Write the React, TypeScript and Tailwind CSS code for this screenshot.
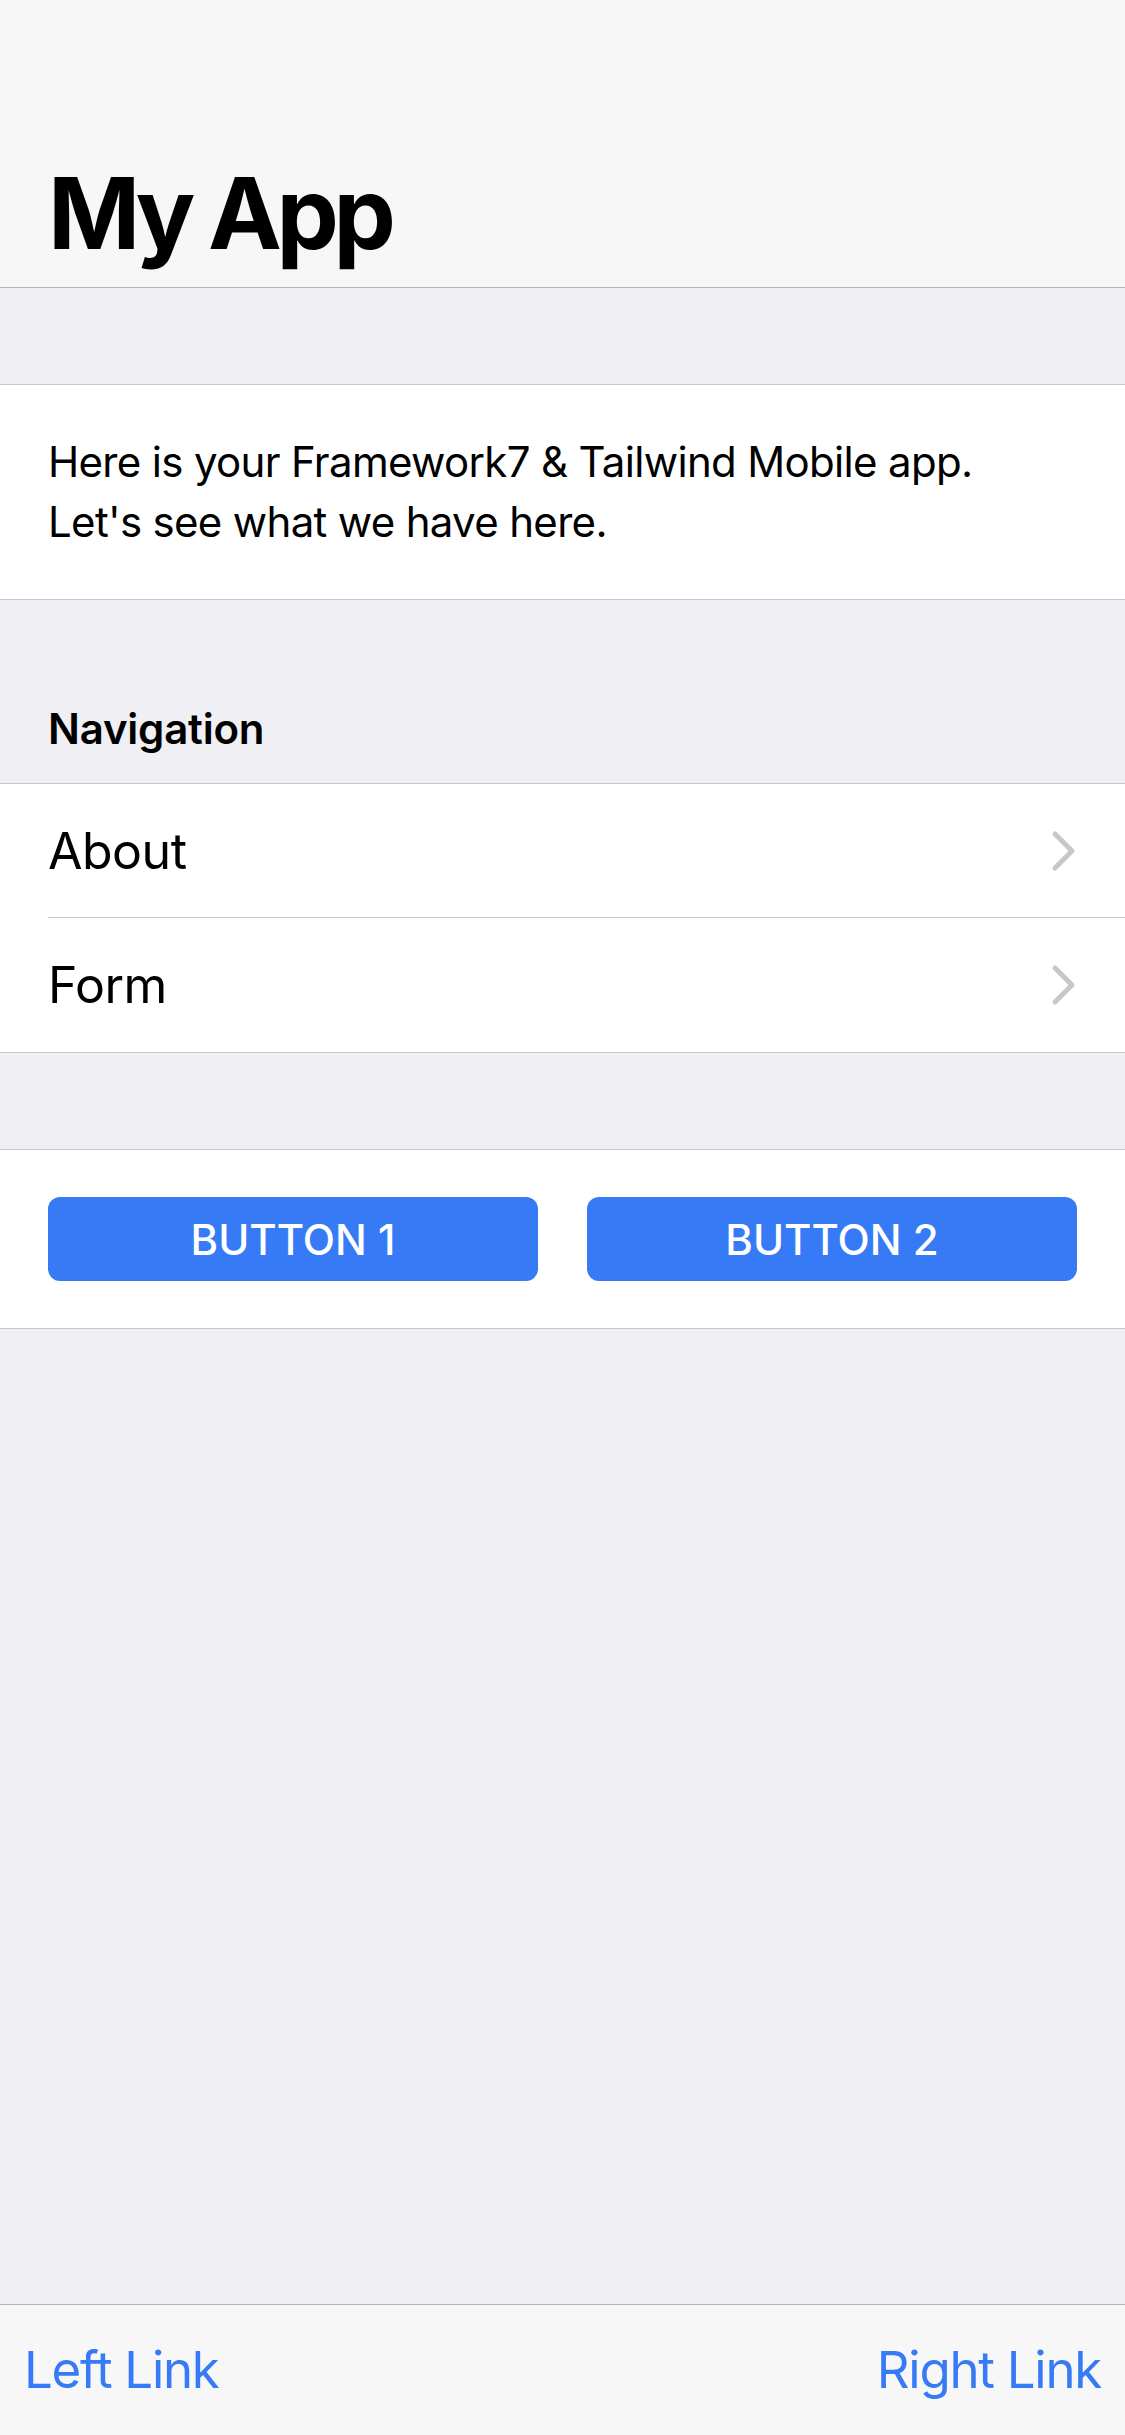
import React from "react";

function Chevron() {
  return (
    <svg width="26" height="42" viewBox="0 0 26 42" className="shrink-0">
      <path d="M4 4 L21 21 L4 38" fill="none" stroke="#c7c7cc" strokeWidth="5" strokeLinecap="round" strokeLinejoin="round" />
    </svg>
  );
}

export default function App() {
  return (
    <div className="h-screen flex flex-col bg-[#efeff4] font-['Inter',sans-serif] text-black overflow-hidden">
      <header className="h-[288px] shrink-0 bg-[#f7f7f8] border-b border-[#b4b4b8] flex items-end px-[48px] pb-[14px]">
        <h1 className="text-[99px] leading-[120px] font-bold tracking-[-0.055em]">My App</h1>
      </header>

      <main className="flex-1 flex flex-col">
        <div className="mt-[96px] bg-white border-y border-[#c8c7cc] px-[48px] py-[47px] text-[42px] leading-[60px] tracking-[-0.016em]">
          <p>Here is your Framework7 &amp; Tailwind Mobile app.</p>
          <p>Let's see what we have here.</p>
        </div>

        <div className="pt-[97px] pb-[23px] px-[48px] text-[42px] leading-[63px] font-semibold tracking-[-0.005em]">Navigation</div>

        <ul className="bg-white border-y border-[#c8c7cc]">
          <li className="pl-[48px]">
            <div className="h-[134px] flex items-center justify-between pr-[48px] border-b border-[#c8c7cc] text-[50px] leading-[60px] tracking-[-0.01em]">
              <span>About</span>
              <Chevron />
            </div>
          </li>
          <li className="pl-[48px]">
            <div className="h-[134px] flex items-center justify-between pr-[48px] text-[50px] leading-[60px] tracking-[-0.01em]">
              <span>Form</span>
              <Chevron />
            </div>
          </li>
        </ul>

        <div className="mt-[96px] bg-white border-y border-[#c8c7cc] px-[48px] py-[47px] grid grid-cols-2 gap-[49px]">
          <button className="h-[84px] rounded-[12px] bg-[#367bf5] text-white text-[42px] font-medium uppercase">Button 1</button>
          <button className="h-[84px] rounded-[12px] bg-[#367bf5] text-white text-[42px] font-medium uppercase">Button 2</button>
        </div>
      </main>

      <footer className="h-[131px] shrink-0 bg-[#f7f7f8] border-t border-[#b4b4b8] flex items-center justify-between px-[24px] text-[51px] tracking-[-0.025em] text-[#367bf5]">
        <a>Left Link</a>
        <a>Right Link</a>
      </footer>
    </div>
  );
}
